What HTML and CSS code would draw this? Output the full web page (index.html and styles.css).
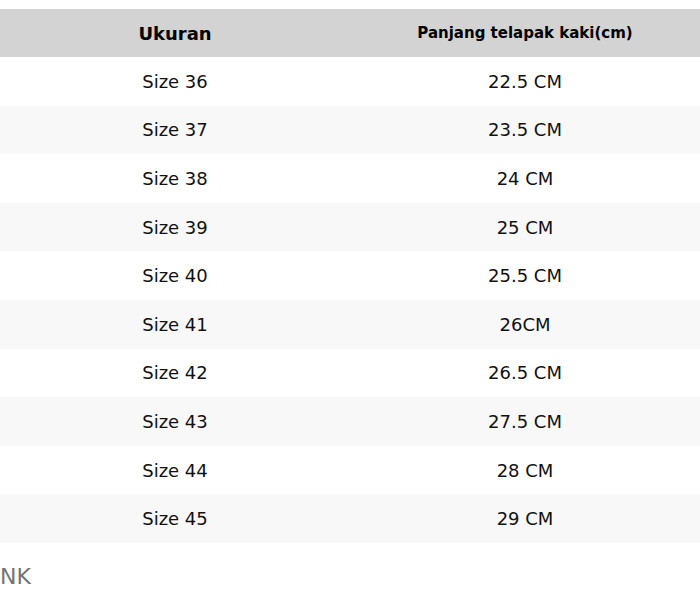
FILE: index.html
```html
<!DOCTYPE html>
<html lang="id">
<head>
<meta charset="utf-8">
<title>Ukuran</title>
<link rel="stylesheet" href="styles.css">
</head>
<body>
<table class="size-table">
  <thead>
    <tr><th class="h-size">Ukuran</th><th class="h-len">Panjang telapak kaki(cm)</th></tr>
  </thead>
  <tbody>
    <tr><td>Size 36</td><td>22.5 CM</td></tr>
    <tr><td>Size 37</td><td>23.5 CM</td></tr>
    <tr><td>Size 38</td><td>24 CM</td></tr>
    <tr><td>Size 39</td><td>25 CM</td></tr>
    <tr><td>Size 40</td><td>25.5 CM</td></tr>
    <tr><td>Size 41</td><td>26CM</td></tr>
    <tr><td>Size 42</td><td>26.5 CM</td></tr>
    <tr><td>Size 43</td><td>27.5 CM</td></tr>
    <tr><td>Size 44</td><td>28 CM</td></tr>
    <tr><td>Size 45</td><td>29 CM</td></tr>
  </tbody>
</table>
<p class="note">NK</p>
</body>
</html>
```
FILE: styles.css
```css
html, body {
  margin: 0;
  padding: 0;
  background: #ffffff;
}
body {
  font-family: "DejaVu Sans", sans-serif;
  color: #111111;
  padding-top: 9px;
}
.size-table {
  width: 700px;
  border-collapse: collapse;
  table-layout: fixed;
}
.size-table th,
.size-table td {
  width: 50%;
  text-align: center;
  vertical-align: middle;
  padding: 0;
}
.size-table th {
  background: #d3d3d3;
  height: 48px;
  font-weight: bold;
  color: #000000;
}
.h-size { font-size: 18px; }
.h-len { font-size: 15px; }
.size-table td {
  height: 48.6px;
  font-size: 18px;
}
.size-table tbody tr:nth-child(even) td {
  background: #f8f8f8;
}
.note {
  margin: 21px 0 0 0;
  font-size: 22px;
  line-height: 26px;
  color: #737373;
}
```
